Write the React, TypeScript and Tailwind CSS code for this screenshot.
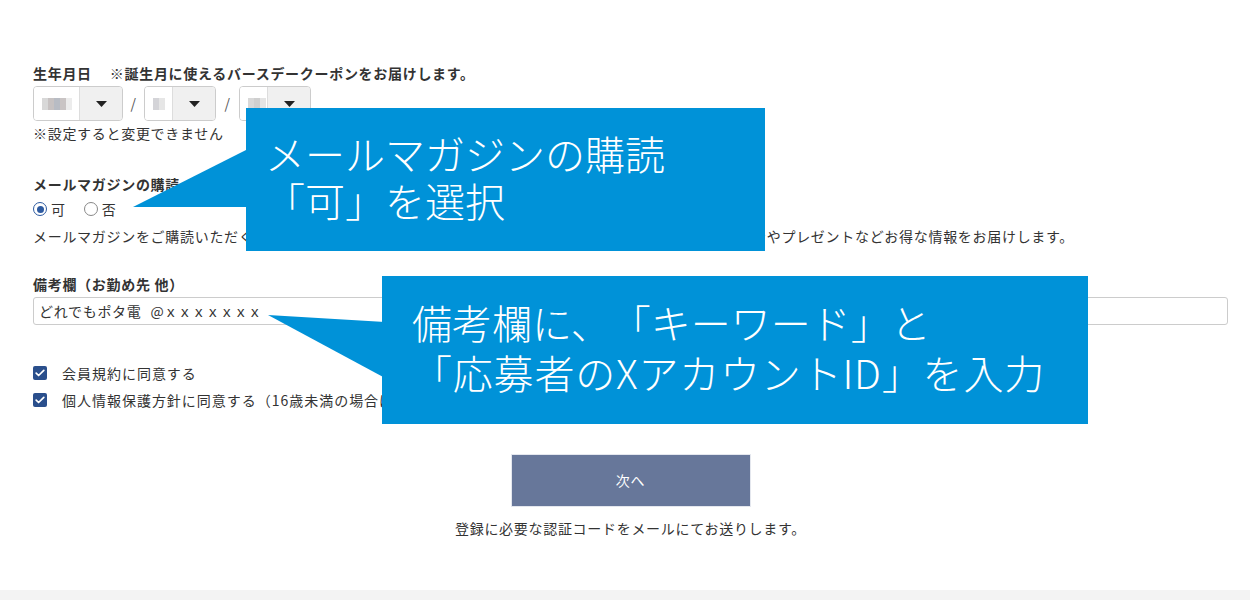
import React from 'react'

const jp = "font-['Noto_Sans_CJK_JP','Noto_Sans',sans-serif]"

const Mosaic = ({ cells }: { cells: string[] }) => (
    <div className="flex">
        {cells.map((c, i) => (
            <div key={i} className="w-[6px] h-[12px]" style={{ backgroundColor: c }} />
        ))}
    </div>
)

const Select = ({ leftW, cells }: { leftW: string; cells: string[] }) => (
    <div className="flex h-[35px] border border-[#cccccc] rounded-[4px] overflow-hidden">
        <div className={`${leftW} flex items-center pl-[8px] bg-white`}>
            <Mosaic cells={cells} />
        </div>
        <div className="w-[43px] flex items-center justify-center bg-[#f0f0f0] border-l border-[#dddddd]">
            <svg width="11" height="6" viewBox="0 0 11 6"><path d="M0 0h11L5.5 6z" fill="#222" /></svg>
        </div>
    </div>
)

const Check = ({ label }: { label: string }) => (
    <div className="flex items-center h-[20px]">
        <span className="w-[14px] h-[14px] rounded-[2px] bg-[#2a4f8c] flex items-center justify-center shrink-0">
            <svg width="10" height="8" viewBox="0 0 10 8"><path d="M1.2 4.2l2.4 2.3L8.8 1.3" stroke="white" strokeWidth="1.7" fill="none" strokeLinecap="round" strokeLinejoin="round" /></svg>
        </span>
        <span className="ml-[15px] whitespace-nowrap tracking-[0.07em]">{label}</span>
    </div>
)

export default function App() {
    return (
        <div className={`${jp} relative w-[1250px] h-[600px] bg-white text-[#333333] text-[14px] tracking-[0.05em] [text-spacing-trim:space-all] overflow-hidden flex flex-col`}>
            <div className="flex-1 pl-[33px] pr-[22px] pt-[63px]">
                <div className="h-[20px] leading-[20px] font-bold">
                    生年月日<span className="ml-[18px]">※誕生月に使えるバースデークーポンをお届けします。</span>
                </div>
                <div className="flex items-center mt-[3px]">
                    <Select leftW="w-[45px]" cells={['#d8d8d8', '#c7c2c2', '#b8bcc4', '#c9c4c4', '#ececec']} />
                    <span className="w-[21px] text-center text-[#555]">/</span>
                    <Select leftW="w-[27px]" cells={['#d4d4d8', '#e6e6e6']} />
                    <span className="w-[23px] text-center text-[#555]">/</span>
                    <Select leftW="w-[27px]" cells={['#d8d8d8', '#cfcfcf', '#e4e4e4']} />
                </div>
                <div className="h-[20px] leading-[20px] mt-[2px]">※設定すると変更できません</div>

                <div className="h-[20px] leading-[20px] mt-[31px] font-bold">メールマガジンの購読</div>
                <div className="flex items-center h-[20px] mt-[5px]">
                    <span className="w-[14px] h-[14px] rounded-full border-[1.5px] border-[#2d5aa0] flex items-center justify-center">
                        <span className="w-[7px] h-[7px] rounded-full bg-[#2d5aa0]" />
                    </span>
                    <span className="ml-[4px]">可</span>
                    <span className="ml-[18px] w-[14px] h-[14px] rounded-full border-[1.5px] border-[#888888]" />
                    <span className="ml-[4px]">否</span>
                </div>
                <div className="h-[20px] leading-[20px] mt-[7px] whitespace-nowrap">
                    メールマガジンをご購読いただくと、最新のキャンペーン情報やセール情報、新商品ご案内、会員限定クーポンやプレゼントなどお得な情報をお届けします。
                </div>

                <div className="h-[20px] leading-[20px] mt-[28px] font-bold">備考欄（お勤め先 他）</div>
                <div className="mt-[3px] h-[28px] border border-[#cccccc] rounded-[3px] flex items-center px-[5px]">
                    どれでもポタ電<span className="ml-[9px] tracking-normal">@ｘｘｘｘｘｘｘ</span>
                </div>

                <div className="mt-[38px]">
                    <Check label="会員規約に同意する" />
                </div>
                <div className="mt-[7px]">
                    <Check label="個人情報保護方針に同意する（16歳未満の場合は保護者の同意を得たうえでご登録ください）" />
                </div>

                <div className="flex flex-col items-center mt-[44px]">
                    <button className="w-[240px] h-[53px] bg-[#67779a] border border-[#e4e7ee] text-white tracking-[0.05em]">次へ</button>
                    <div className="h-[20px] leading-[20px] mt-[11px]">登録に必要な認証コードをメールにてお送りします。</div>
                </div>
            </div>
            <div className="h-[10px] bg-[#f3f3f3]" />

            <svg className="absolute left-[132px] top-[148px]" width="116" height="60" viewBox="0 0 116 60">
                <polygon points="1,59 116,1 116,59" fill="#0092d8" />
            </svg>
            <div className="absolute left-[246px] top-[108px] w-[519px] h-[143px] bg-[#0092d8] text-white text-[40px] font-light leading-[47px] tracking-normal pl-[19px] pt-[22px]">
                <div>メールマガジンの購読</div>
                <div>「可」を選択</div>
            </div>

            <svg className="absolute left-[267px] top-[314px]" width="118" height="66" viewBox="0 0 118 66">
                <polygon points="1,1 118,8 118,64" fill="#0092d8" />
            </svg>
            <div className="absolute left-[382px] top-[276px] w-[706px] h-[148px] bg-[#0092d8] text-white text-[40px] font-light leading-[50px] tracking-normal pl-[30px] pt-[21px]">
                <div>備考欄に、「キーワード」と</div>
                <div className="tracking-[0.02em]">「応募者のXアカウントID」を入力</div>
            </div>
        </div>
    )
}
